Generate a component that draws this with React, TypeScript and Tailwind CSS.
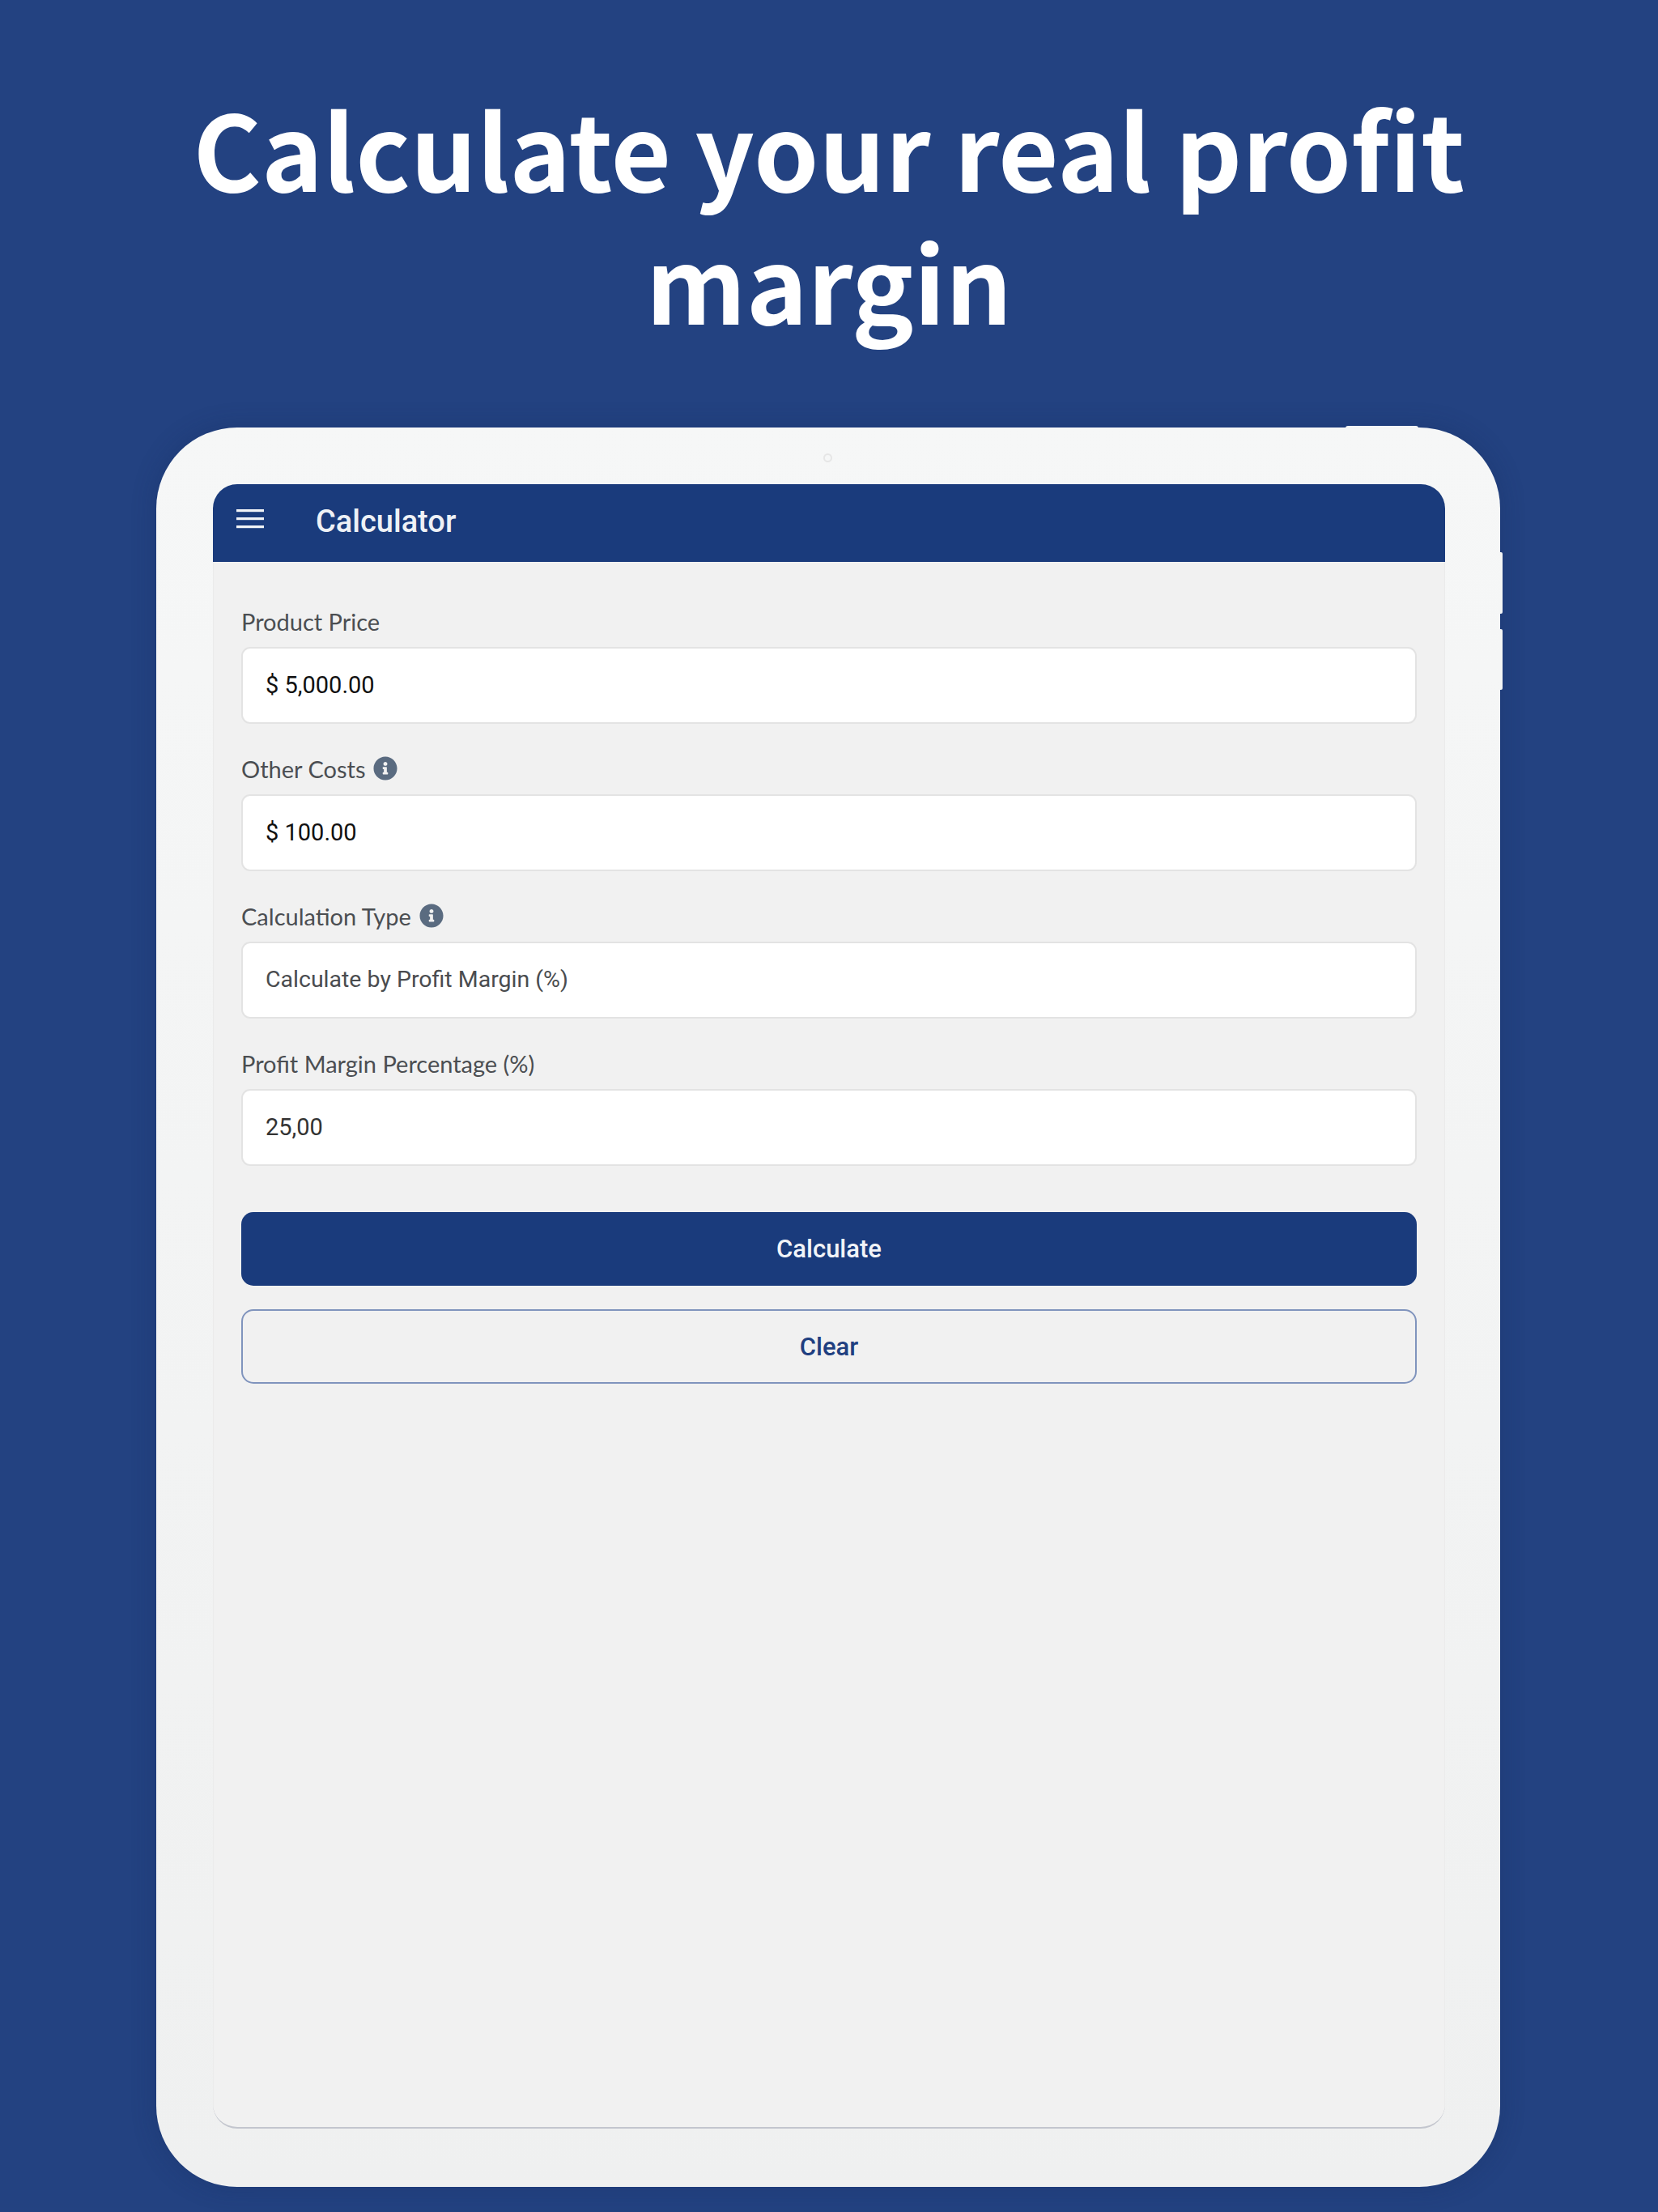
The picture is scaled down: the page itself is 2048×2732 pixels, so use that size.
import { FaInfoCircle } from "react-icons/fa";

const lato = "font-['Lato',sans-serif]";
const roboto = "font-['Roboto',sans-serif]";

function Field({ label, value, info, color }: { label: string; value: string; info?: boolean; color: string }) {
  return (
    <div className="flex flex-col">
      <div className={`flex h-[40px] items-center gap-[10px] mb-[11px] text-[29px] leading-[40px] text-[#4b4e52] ${lato}`}>
        <span>{label}</span>
        {info && <FaInfoCircle className="w-[30px] h-[30px] text-[#5a6b80] -mt-[3px]" />}
      </div>
      <div
        className={`flex h-[95px] items-center rounded-[11px] border-2 border-[#e3e3e3] bg-white px-[28px] ${roboto} ${color}`}
      >
        {value}
      </div>
    </div>
  );
}

export default function App() {
  return (
    <div className="h-[2732px] overflow-hidden bg-[#234281]">
      <h1 className="pt-[99px] h-[528px] px-[100px] text-center text-[128.5px] leading-[164px] font-bold text-white font-['Noto_Sans_CJK_SC','Noto_Sans',sans-serif]">
        Calculate your real profit margin
      </h1>
      <div className="relative ml-[193px] flex h-[2173px] w-[1660px] flex-col rounded-[100px] bg-gradient-to-b from-[#f6f7f7] to-[#eff0f0] pl-[70px] pr-[68px] pb-[72px] pt-[70px] shadow-[0_0_30px_rgba(20,40,90,0.3)]">
        <div className="absolute -top-[2px] left-[1469px] h-[4px] w-[90px] rounded-t-[3px] bg-[#f5f6f6]" />
        <div className="absolute -right-[3px] top-[154px] h-[76px] w-[3px] rounded-r-[2px] bg-[#f4f5f5]" />
        <div className="absolute -right-[3px] top-[249px] h-[75px] w-[3px] rounded-r-[2px] bg-[#f4f5f5]" />
        <div className="absolute left-[824px] top-[32px] h-[11px] w-[11px] rounded-full border-2 border-[#e6e6e6]" />
        <div className="flex flex-1 flex-col overflow-hidden rounded-[30px] border-b-2 border-b-[#c3c6ce] bg-[#f1f1f1]">
          <header className="flex h-[96px] shrink-0 items-center bg-[#1a3b7c] pl-[29px] pb-[4px] text-white">
            <svg width="34" height="24" viewBox="0 0 34 24" className="mb-[6px]">
              <rect x="0" y="0" width="34" height="3.2" fill="#f1f3f7" />
              <rect x="0" y="10" width="34" height="3.2" fill="#f1f3f7" />
              <rect x="0" y="20" width="34" height="3.2" fill="#f1f3f7" />
            </svg>
            <span className={`ml-[64px] text-[38px] font-medium text-[#eef1f6] ${roboto}`}>Calculator</span>
          </header>
          <main className="flex flex-1 flex-col gap-[36px] border-x border-x-[#ebebeb] px-[34px] pt-[54px] text-[29px]">
            <Field label="Product Price" value="$ 5,000.00" color="text-[#111111]" />
            <Field label="Other Costs" value="$ 100.00" info color="text-[#111111]" />
            <Field label="Calculation Type" value="Calculate by Profit Margin (%)" info color="text-[#4a4c4f] text-[28.5px]" />
            <Field label="Profit Margin Percentage (%)" value="25,00" color="text-[#333333]" />
            <button className={`mt-[21px] h-[91px] rounded-[15px] bg-[#1a3b7c] pt-[2px] text-[31px] font-medium text-[#f2f4f8] ${roboto}`}>
              Calculate
            </button>
            <button className={`-mt-[7px] h-[92px] rounded-[15px] border-2 border-[#8094bd] pt-[2px] text-[31px] font-medium text-[#1f3f80] ${roboto}`}>
              Clear
            </button>
          </main>
        </div>
      </div>
    </div>
  );
}
